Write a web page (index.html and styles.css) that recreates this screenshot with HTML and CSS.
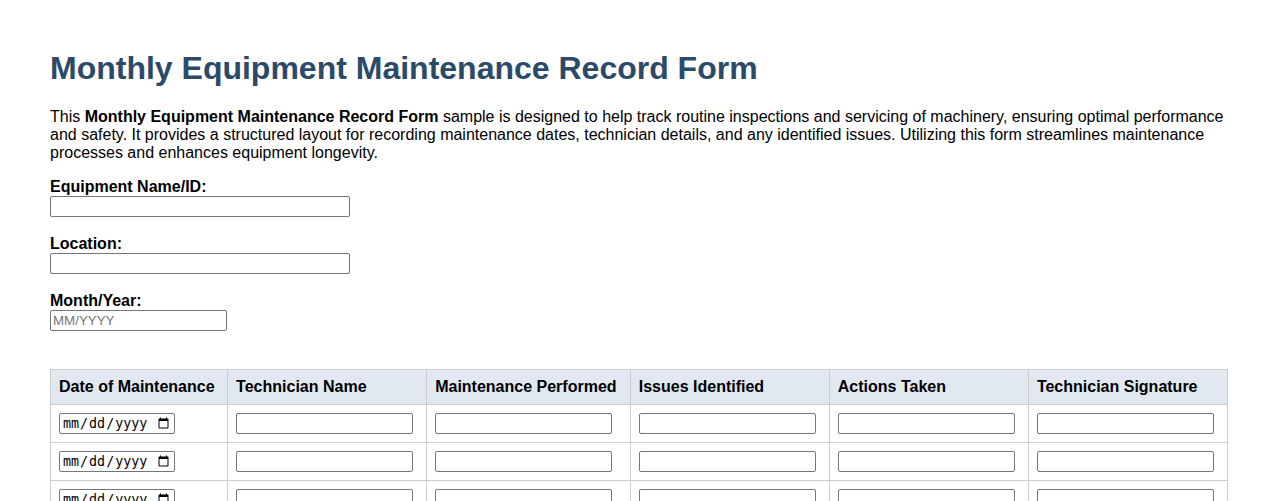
FILE: index.html
```html
<!DOCTYPE html>
<html lang="en">
<head>
<title>Monthly Equipment Maintenance Record Form</title>
<meta charset="utf-8">
<link rel="stylesheet" href="styles.css">
</head>
<body>
<div class="page">
  <h1 class="title">Monthly Equipment Maintenance Record Form</h1>
  <p class="intro">This <strong>Monthly Equipment Maintenance Record Form</strong> sample is designed to help track routine inspections and servicing of machinery, ensuring optimal performance and safety. It provides a structured layout for recording maintenance dates, technician details, and any identified issues. Utilizing this form streamlines maintenance processes and enhances equipment longevity.</p>

  <form class="record">
    <div class="field">
      <label for="equip">Equipment Name/ID:</label>
      <input type="text" id="equip" class="wide">
    </div>
    <div class="field">
      <label for="loc">Location:</label>
      <input type="text" id="loc" class="wide">
    </div>
    <div class="field">
      <label for="month">Month/Year:</label>
      <input type="text" id="month" placeholder="MM/YYYY">
    </div>

    <table class="log">
      <thead>
        <tr>
          <th>Date of Maintenance</th>
          <th>Technician Name</th>
          <th>Maintenance Performed</th>
          <th>Issues Identified</th>
          <th>Actions Taken</th>
          <th>Technician Signature</th>
        </tr>
      </thead>
      <tbody>
        <tr>
          <td><input type="date"></td>
          <td><input type="text"></td>
          <td><input type="text"></td>
          <td><input type="text"></td>
          <td><input type="text"></td>
          <td><input type="text"></td>
        </tr>
        <tr>
          <td><input type="date"></td>
          <td><input type="text"></td>
          <td><input type="text"></td>
          <td><input type="text"></td>
          <td><input type="text"></td>
          <td><input type="text"></td>
        </tr>
        <tr>
          <td><input type="date"></td>
          <td><input type="text"></td>
          <td><input type="text"></td>
          <td><input type="text"></td>
          <td><input type="text"></td>
          <td><input type="text"></td>
        </tr>
        <tr>
          <td><input type="date"></td>
          <td><input type="text"></td>
          <td><input type="text"></td>
          <td><input type="text"></td>
          <td><input type="text"></td>
          <td><input type="text"></td>
        </tr>
      </tbody>
    </table>
  </form>
</div>
</body>
</html>
```

FILE: styles.css
```css
html, body { margin: 0; padding: 0; }
body { font-family: "Liberation Sans", Arial, sans-serif; font-size: 16px; color: #000; background: #fff; }
.page { padding: 50px 50px 40px; }
.title { margin: 0 0 21px; font-size: 32px; font-weight: bold; color: #2b4a6a; }
.intro { margin: 0 0 16px; line-height: 18px; }
.field { margin-bottom: 18px; }
.field label { display: block; font-weight: bold; }
input[type="text"] { font-family: "Liberation Sans", Arial, sans-serif; font-size: 13.333px; width: 177px; height: 21px; box-sizing: border-box; border: 1px solid #767676; border-radius: 2px; padding: 1px 2px; }
input.wide { width: 300px; }
input[type="date"] { font-size: 13.333px; width: 116px; height: 21px; box-sizing: border-box; border: 1px solid #767676; border-radius: 2px; padding: 1px 2px; }
.log { width: 100%; border-collapse: collapse; margin-top: 38px; }
.log th, .log td { border: 1px solid #ccc; padding: 8px; text-align: left; }
.log th { background: #e2e8f0; font-weight: bold; }
```
